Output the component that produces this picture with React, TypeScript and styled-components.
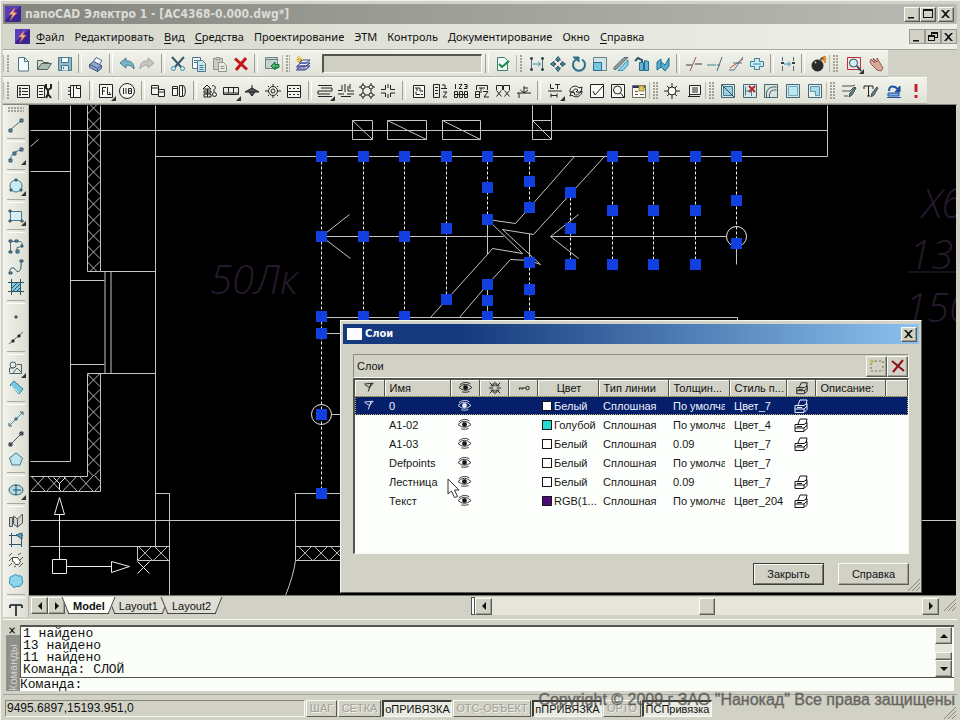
import React from "react";
import styled, { createGlobalStyle, css } from "styled-components";

const FACE = "#d2d1c6";
const SHADE = "#85857b";
const DARK = "#3c3c38";
const TOOL = "#e9eae1";
const UI = `"Liberation Sans", Arial, sans-serif`;
const MENU = `"Noto Sans", Tahoma, sans-serif`;

const GlobalStyle = createGlobalStyle`
  * { box-sizing: border-box; }
  body { margin: 0; background: ${FACE}; font-family: ${UI}; font-size: 11px; color: #111; }
  button, input { font: inherit; color: inherit; border-radius: 0; }
  button { padding: 0; margin: 0; }
`;

/* ---------- drawing data ---------- */

type Stroke = [d: string, stroke?: string, fill?: string, width?: number];

const K = "#222222";
const S = "#4e7488";
const B = "#2f8fb4";
const G = "#8f9691";

const icons: Record<string, Stroke[]> = {
  page: [["M3.5 1.5h6l4 4v9.500h-10z", S, "#f4fbff"], ["M9.500 1.500v4h4", S]],
  open: [["M1.500 13.500v-9h5l1 2h5v2", "#50645f", "#cfdcd2"], ["M1.500 13.500l4-6h10l-4 6z", "#50645f", "#a9bdb5"]],
  save: [["M1.500 1.500h13v13h-13z", S, "#8fbccb"], ["M4.500 1.500h7v5h-7z", S, "#f2fafc"], ["M4.500 14.500v-5h7v5", S, "#dcecf2"], ["M6.500 11v2", S]],
  print: [["M5 6L8 1.500l6 3L11 9", "#4c6688", "#fff"], ["M1.500 8.500l4-3 8 4v3l-4 3-8-4z", "#3b5484", "#8fa8c8"], ["M1.500 8.500l8 4 4-3M9.500 12.500v3", "#3b5484"]],
  undo: [["M1 7l6-5v3c5-.5 8 2 8 8-2-3-4-4-8-4v3z", S, "#79b7d0"]],
  redo: [["M15 7L9 2v3C4 4.500 1 7 1 13c2-3 4-4 8-4v3z", "#a3a8a2", "#c4c8c1"]],
  cut: [["M2 1l9 10M14 1L5 11", "#37566a", "none", 2], ["M1.500 12.500a2 2 0 1 0 4 0a2 2 0 1 0-4 0M10.500 12.500a2 2 0 1 0 4 0a2 2 0 1 0-4 0", B]],
  copy: [["M1.500 1.500h8v11h-8z", S, "#f4fbff"], ["M6.500 4.500h5l3 3v8h-8z", S, "#c4e6f1"], ["M3 4.500h3M3 6.500h3M8.500 9.500h4M8.500 11.500h4M8.500 13.500h4", S]],
  paste: [["M1.500 2.500h9v11h-9z", G, "#c9ccc3"], ["M4 1.500h4v2h-4z", G, "#ddd"], ["M6.500 6.500h5l3 3v6h-8z", G, "#e9ebe4"], ["M8.500 10.500h4M8.500 12.500h4", G]],
  remove: [["M2 2.500l12 11M13 2L3 14", "#c4161c", "none", 3]],
  insert: [["M1.500 1.500h12v11h-12z", "#6d8487", "#c5d2cb"], ["M1.500 3.500h12", "#6d8487"], ["M7 10l4-4v2.500h4v3h-4V14z", "#14713a", "#45b36a"]],
  layers: [["M2 13l4-3h9l-4 3zM2 10l4-3h9l-4 3zM4 7l3-3h8l-4 3z", "#39438f", "#f1f3fb", 1], ["M1 14h9l5-4M1 11h9l5-4", "#39438f"], ["M4 0v7M1 3.500h7M2 1l5 5M7 1L2 6", "#d5b32b"]],
  accept: [["M2.500 1.500h7l3 3v10h-10z", "#3d7c68", "#eefaf3"], ["M4 8l3 3 7-6", "#168a4b", "none", 2]],
  stretchX: [["M2.500 1v14M13.500 1v14", "#4b6a78"], ["M1 2.500h3M1 13.500h3M12 2.500h3M12 13.500h3", "#34434c", "none", 2], ["M4 8h7M9 5.500L11.500 8 9 10.500", B]],
  move: [["M8 1v5M8 10v5M1 8h5M10 8h5", "#47636f", "none", 2], ["M5.500 4L8 .5 10.500 4zM5.500 12L8 15.500l2.500-3.500zM4 5.500L.5 8 4 10.500zM12 5.500L15.500 8 12 10.500z", "#1e4d63", "#57a5c2"]],
  rotate: [["M5 3.500a6 6 0 1 0 6 0", "#2f6f8c", "none", 2], ["M2 1h6v5z", "#2f6f8c", "#2f6f8c"]],
  scale: [["M1.500 1.500h13v13h-13z", "#6b8089", "#cfe5ea"], ["M1.500 6.500h8v8h-8z", "#2a6f90", "#79c6e0"]],
  mirror: [["M1 11.500L11 1.500h4l-12 12H1z", "#5a6a70", "#8c9a9d"], ["M5 14.500L15 4v5l-5 5.500z", B, "#8fd0e4"]],
  array: [["M1 5l3-3 4 2v4", "#37566a", "none", 2], ["M5.500 6.500h4v8h-4zM10.500 4.500l4 1v9h-4z", "#226a8a", "#62b4d2"]],
  offset: [["M2 6l4-3v8l-4 3zM6 6l4 3 4-7v8l-4 5-4-4", "#226a8a", "#52b0d4"]],
  trim: [["M0 9h6M9 8h7", "#3a3f42"], ["M10 1L4 15", "#a55050"]],
  extend: [["M0 9h9", "#3f8298"], ["M10 9h3M15 1l-5 14", "#4b6a78"]],
  breakLine: [["M2 12L15 3", "#c0444c"], ["M1 14h5l9-13M5 7h9", "#52748a"]],
  join: [["M1.500 5.500h4v-3h5v3h4v5h-4v3h-5v-3h-4z", "#3a7f9c", "#cdebf3"], ["M4 8h8", B]],
  fit: [["M2.500 1v4M2.500 10v5M13.500 1v4M13.500 10v5", "#4b6a78"], ["M4 8h6M8 5.500L10.500 8 8 10.500", B], ["M1 7h3M12 7h3", "#34434c", "none", 2]],
  bomb: [["M1 9.500a5.500 5.500 0 1 0 11 0a5.500 5.500 0 1 0-11 0", "#1e1e1e", "#2b2b2b"], ["M9 5l2-3 2 1", "#6d5837", "none", 2], ["M12 1h3M12 5l3-3M14 4v3", "#e5902f", "none", 2], ["M4 7l1-1", "#bbb", "none", 2]],
  zoomBox: [["M1.500 1.500h13v12h-13z", "#c02b35"], ["M3.500 7a4 4 0 1 0 8 0a4 4 0 1 0-8 0", "#31485a", "#d5eff6"], ["M11 10l4 5", "#31485a", "none", 2]],
  pan: [["M2 3l4 4-2-5 4 4 0-4 3 5 3 5-2 3-4-1-5-5-2-3z", "#93574f", "#dba99b"]],

  list: [["M2.500 2.500h12v12h-12z", K, "#f4f5ef"], ["M7 5.500h6M7 8.500h6M7 11.500h6", K], ["M4 5.500h2M4 8.500h2M4 11.500h2", K, "none", 2]],
  listTool: [["M1.500 2.500h7v12h-7z", K, "#f4f5ef"], ["M3 5.500h4M3 8.500h4M3 11.500h4", K], ["M10 1v4l2 2v4l-2 4M15 1v4l-3 2M12 11l3 4", K, "none", 2]],
  book: [["M3.500 2.500h10v12h-10z", K, "#f7f8f2"], ["M6.500 2.500v12M9.500 2.500v3h4", K], ["M1 4.500h3M1 8h3M1 11.500h3", K]],
  fl: [["M1.500 1.500h13v13h-13z", K, "#f7f8f2"], ["M4.500 12V4.500H8M4.500 8H7M9.500 4v7.500H13M11 9l2 3", K]],
  num: [["M.5 8a7.500 7.500 0 1 0 15 0a7.500 7.500 0 1 0-15 0", K, "#f7f8f2"], ["M4.500 5v6M7 5v6M9.500 5.500h3v5h-3zM9.500 8h3", K]],
  copyObj: [["M1.500 2.500h7v9h-7zM1.500 5h7", K, "#f2f3ed"], ["M8.500 6.500h6v7h-6zM8.500 9h6", K, "#f2f3ed"]],
  panels: [["M1.500 3.500h5v9h-5zM1.500 5.500h5", K, "#f2f3ed"], ["M8.500 2.500h3v11h-3zM12 2.500c3 0 3 11 0 11", K, "#f2f3ed"]],
  house: [["M1 6l4-4 4 4zM2 8h7v2H2zM2 11h7v3H2zM5.500 6v8", K], ["M10 3c2-1 4 0 3 3M12 6v3M10.500 11.500a2 2 0 1 0 4 0a2 2 0 1 0-4 0", K]],
  wall: [["M.5 4.500h15v7H.5zM.5 10h15M5.500 4.500V10M10.500 4.500V10", K]],
  lamp: [["M8 2v4M1 9l7-4 7 4zM5 9l3 4 3-4", K, "#555"]],
  sun: [["M3.500 8a4.500 4.500 0 1 0 9 0a4.500 4.500 0 1 0-9 0M6 8a2 2 0 1 0 4 0a2 2 0 1 0-4 0", K], ["M8 1v2M8 13v2M0 8h3M13 8h3M3 3l1 1M13 3l-1 1M3 13l1-1M13 13l-1-1", K]],
  grille: [["M1.500 2.500h13v12h-13z", K, "#f2f3ed"], ["M1.500 8.500h13M3 5.500h2M7 5.500h2M11 5.500h2M3 11.500h2M7 11.500h2M11 11.500h2", K]],
  route: [["M1 2.500h14M1 13.500h14M4 5h11v3H1v3h12", K]],
  crossA: [["M0 11h6M9 11h7M0 7.500h4V2M7 1v8M10 3v5h6M12 1v5M3 13.500h10", K]],
  nodes: [["M2 4a2 2 0 1 0 4 0a2 2 0 1 0-4 0M10 4a2 2 0 1 0 4 0a2 2 0 1 0-4 0M2 12a2 2 0 1 0 4 0a2 2 0 1 0-4 0M10 12a2 2 0 1 0 4 0a2 2 0 1 0-4 0", K], ["M4 0v2M12 0v2M6 4h4M0 4h2M14 4h2M4 6v4M12 6v4M6 12h4M0 12h2M14 12h2M4 14v2M12 14v2", K]],
  junction: [["M1 6.500h4.500V2M10.500 2v4.500H15M1 10h4.500v4M10.500 14v-4H15M8 1v4M8 11v4", K]],
  tree: [["M2.500 2.500h11v12h-11z", K, "#f7f8f2"], ["M4 5h5v3h3M5 8.500v3h4M10 11.500h2M6 5v3", K]],
  sortDoc: [["M1.500 1.500h6v13h-6z", K], ["M3 4.500h3M3 7.500h3M3 10.500h3M10 2h3v4M11 9h4l-4 5h4M9 5.500h6", K]],
  digits: [["M2.500 1v5M6 1.500h3l-3 4h3M11 1.500h3v4h-3M12 3.500h2", K], ["M1.500 8.500h3v6h-3zM6.500 8.500h3v6h-3zM11.500 8.500h3v6h-3zM1.500 11.500h13", K]],
  devices: [["M2.500 7V2.500h11V7M5 5h6M1.500 8.500h4v6h-4zM1.500 11.500h4M9 8.500h5l-4 5.500h5M7 5v5", K]],
  links: [["M1.500 7V2.500h6V7M8.500 7V2.500h6V7M1.500 7.500l5 6M6.500 7.500l-5 6M9.500 7.500l5 6M14.500 7.500l-5 6", K]],
  branch: [["M1 10h14M8 3v7M8 5h4M3 10v5M4.500 7L8 10l4-3", K]],
  lt: [["M3.500 1v4.500H7M8 1.500h5M10.500 1.500V6M1 8h14M4 10.500v4M4 12.500h6M10 10.500v4", K]],
  refresh: [["M2 9c-1-5 6-8 9-4l3-1-1 5H8l2-2c-2-2-5-1-5 2zM14 8c0 5-6 8-10 4l-2 1 1-4 4 1-1 1c2 2 5 1 6-2z", K, "#f7f8f2"]],
  check: [["M1.500 1.500h13v13h-13z", K, "#fafbf6"], ["M4 8l2 4 8-9", K]],
  find: [["M1.500 1.500h13v13h-13z", K, "#f7f8f2"], ["M3.500 7a4 4 0 1 0 8 0a4 4 0 1 0-8 0M10.500 10l4 5", K, "none", 1]],
  props: [["M1.500 2.500h13v12h-13z", "#6d6d5d", "#fbfbf4"], ["M2 4h12", "#27306c", "none", 2], ["M8 3h5v5H8z", "#a08a3a", "#e2c75c"], ["M4 8.500h3M4 11.500h3M9 11.500h4", "#555"]],
  target: [["M4 8a4 4 0 1 0 8 0a4 4 0 1 0-8 0", K, "#f7f8f2"], ["M8 0v4M8 12v4M0 8h4M12 8h4M3 3l2 2M13 3l-2 2M3 13l2-2M13 13l-2-2", K]],
  sheet: [["M3.500 2.500h11v9h-11z", K, "#f7f8f2"], ["M6 5h6M6 7h6M6 9h6M2 13.500h12M3.500 5v8", K, "none", 1]],
  viewLine: [["M1.500 1.500h13v13h-13z", "#476774", "#d8e9e9"], ["M3.500 3.500h9v9h-9z", "#477c94", "#9dd0e0"], ["M2 2l12 12", "#2c4853"]],
  viewX: [["M1.500 1.500h13v13h-13z", "#476774", "#d8e9e9"], ["M3.500 12.500v-9M3.500 8h6v5", "#477c94"], ["M7 3l6 6M13 3L7 9", "#b8202a", "none", 2]],
  viewArc: [["M1.500 1.500h13v13h-13z", "#476774", "#d8e2dc"], ["M3.500 14V9q2-5 6-5h4M6.500 14v-3q1-4 4-4h3", "#4b666d"]],
  viewRect: [["M1.500 1.500h13v13h-13z", "#476774", "#cfe9ef"], ["M3.500 3.500h9v9h-9z", "#72aabf", "#bfe7f2"]],
  viewL: [["M1.500 1.500h13v13h-13z", "#476774", "#e4efee"], ["M3.500 3.500h9v9h-4v-4h-5z", "#5f91a7", "#a6dcee"]],
  flow: [["M1 3h10l3-1M1 8h8l4-4M3 13h4", "#47555a"], ["M8 14l1-4 5-6 1 1-4 7z", "#3a5058", "#66828a"]],
  textBrush: [["M1 3h9M5.500 3v10M1 3v3M10 3v3M4 13h3", K, "none", 1], ["M8 14l1-4 5-6 1 1-4 7z", "#3a5058", "#66828a"]],
  export: [["M1 14.500h14M2 10h11v3H2z", "#1d4fa3", "#7fb0e2"], ["M3 8q0-6 6-4l4 3", "#1d4fa3", "none", 2], ["M14 3v6H9z", "#1d4fa3", "#1d4fa3"]],
  alert: [["M8 1v8", "#c4252c", "none", 3], ["M8 12v3", "#c4252c", "none", 3]],

  line: [["M2 13L14 3", S], ["M1 12h3v3H1zM12 2h3v3h-3z", "#37566a", "#5b90a6"]],
  arc: [["M2 14Q3 4 14 3", S], ["M1 12h3v3H1zM12 1h3v3h-3zM5 5h3v3H5z", "#37566a", "#5b90a6"]],
  circle: [["M2 8a6 6 0 1 0 12 0a6 6 0 1 0-12 0", S, "#c8ecf5"], ["M7 1h2v2H7zM2 11h2v2H2zM12 11h2v2h-2z", "#37566a", "#5b90a6"]],
  rect: [["M2.500 3.500h11v9h-11z", S, "#d6edf2"], ["M1 2h2v2H1zM13 12h2v2h-2zM1 12h2v2H1z", "#37566a", "#5b90a6"]],
  poly: [["M2.500 14V3.500H11q4 0 3 4-1 2-5 2v4", S], ["M1 2h3v2H1zM7 2h3v2H7zM1 13h3v2H1zM8 12h3v3H8zM13 7h2v2h-2z", "#37566a", "#5b90a6"]],
  spline: [["M2 14q-1-6 4-5 2 3 4 4 4-2 3-11", "#37566a"], ["M12 1h3v2h-3zM1 13h3v2H1z", "#37566a", "#5b90a6"]],
  hatch: [["M3.500 3.500h9v9h-9z", "#2e5264", "#7fc9df"], ["M0 3.500h16M0 12.500h16M3.500 0v16M12.500 0v16M4 9l5-5M5 12l7-7M9 12l3-3", "#2e5264"]],
  point: [["M7 7h2v2H7z", "#37424a", "#9aa9ad"]],
  ray: [["M1 14L15 2", "#5a6e76"], ["M4 10h2v2H4zM10 5h2v2h-2z", "#222", "#455"]],
  region: [["M2 5a3 3 0 1 0 6 0a3 3 0 1 0-6 0M1.500 12.500V8h4M1.500 13.500h12v-9H9M5 13l4-5 4 4", "#48606b"]],
  tag: [["M2 5l4-4 9 8-4 5z", "#2c7f9c", "#7cc8df"], ["M3 6l8 7", "#fff"]],
  construct: [["M2 14L14 2", B], ["M7 7h2v2H7zM1 12v3h3M12 1h3v3", "#37566a"]],
  segment: [["M2 14L14 2", "#4b5a60"], ["M1 12h3v3H1zM12 1h3v3h-3z", "#37424a", "#556"]],
  pentagon: [["M8 2l6.500 5-2.500 7H4L1.500 7z", S, "#b8e5ef"]],
  ellipse: [["M1 8a7 5 0 1 0 14 0a7 5 0 1 0-14 0", "#356178", "#b4dbe8"], ["M8 2v11M5 8h8", "#24485c"]],
  map: [["M1.500 5.500h3v9h-3zM5.500 4l4 3v8l-4-3zM9.500 7l5-5v9l-5 4", "#4a5558", "#d0d4cc"]],
  clip: [["M1 3.500h14M1 12.500h13M3.500 1v14M13.500 4v11", "#37566a"], ["M8 3l6-2v6z", "#37566a", "#57a5c2"]],
  island: [["M1 4l3-3M1 9l4-4M10 3l3-2M12 8l3-3M1 14l3-3M11 15l4-4M6 15l2-1", "#555"], ["M4.500 5.500h5l3 4-2 3h-3l-2-3h-1z", "#444", "#fff"]],
  cloud: [["M5 3q3-3 5 0 5-1 4 3 2 4-1 6-2 3-4 1-4 3-5-1-4-1-2-5-1-4 3-4z", B, "#8fd6ec"]],
  text: [["M2 4h12M8 4v11M2 4v3M14 4v3", "#3d474b", "none", 2]],

  flag: [["M1.500 3.500l10-1-4 5-5-3M9 3L6 12", "currentColor"]],
  eye: [["M0 8q8-8 16 0-8 7-16 0z", "currentColor"], ["M5.500 8a2.500 2.500 0 1 0 5 0a2.500 2.500 0 1 0-5 0", "currentColor", "currentColor"], ["M1 4.500q7-5 13-1M4 13.500q5 1 9-.5", "currentColor"]],
  snow: [["M8 1v5M8 10v5M1 8h5M10 8h5M2 2l4 4M14 2l-4 4M2 14l4-4M14 14l-4-4M3 5.500h3v-3M10 2.500v3h3M3 10.500h3v3M13 10.500h-3v3", "currentColor"]],
  key: [["M10 8a2 2 0 1 0 4 0a2 2 0 1 0-4 0M10 8H2M3 8v2M6 8v2", "currentColor"]],
  printer: [["M5 7l2-5h7l-1 5", "currentColor"], ["M2 7.500h9l3-2v6l-3 3H2zM2 11h9l3-3M11 11v3M4 9.500h5", "currentColor"]],
  addRow: [["M2 3h2M6 3h2M10 3h2M14 3v2M2 5v2M2 9v2M2 13h2M6 13h2M10 13h2M14 8v2M14 12v1", "#6f6f4c"], ["M3 1v5M1 3.500h5", "#c2b53e"]],
  dropRow: [["M2 3l12 10M13 2L3 14", "#8a1217", "none", 2]],
};

const Svg = styled.svg<{ $w: number; $h: number }>`
  display: block;
  flex: none;
  width: ${(p) => p.$w}px;
  height: ${(p) => p.$h}px;
  overflow: visible;
`;

function Icon({ name, size = 16, more = false }: { name: string; size?: number; more?: boolean }) {
  return (
    <Svg $w={size} $h={size} viewBox="0 0 16 16" aria-hidden="true">
      {icons[name].map(([d, stroke, fill, width], i) => (
        <path key={i} d={d} stroke={stroke ?? K} fill={fill ?? "none"} strokeWidth={width ?? 1} />
      ))}
      {more && <path d="M18 13v5h-5z" fill="#333" />}
    </Svg>
  );
}

function Bolt({ size }: { size: number }) {
  return (
    <Svg $w={size} $h={size} viewBox="0 0 16 16" aria-hidden="true">
      <rect width="16" height="16" rx="1" fill="#3b2391" />
      <path d="M0 0h16L0 14z" fill="#5a3cb8" />
      <path d="M10 1.500L4 8.500h3.500L5 14.500l7-8H8.500z" fill="#f6b777" stroke="#c65f5f" strokeWidth=".5" />
    </Svg>
  );
}

/* ---------- frame ---------- */

const raised = css`
  background: ${FACE};
  border: 1px solid;
  border-color: #fbfbf5 #5c5c55 #5c5c55 #fbfbf5;
  box-shadow: inset -1px -1px 0 #a09f95;
`;

const Window = styled.div`
  display: flex;
  flex-direction: column;
  min-height: 100vh;
  padding: 4px 3px 0;
  background: ${FACE};
  box-shadow: inset 1px 1px 0 #f3f3ec;
`;

const TitleBar = styled.header`
  display: flex;
  align-items: center;
  height: 20px;
  padding: 0 3px 0 2px;
  background: linear-gradient(90deg, #858680, #b9bbb5);
  color: #dcdcd6;
`;

const Title = styled.h1`
  flex: 1;
  margin: 0 0 0 4px;
  font: bold 12px/18px "DejaVu Sans Condensed", "Noto Sans", Tahoma, sans-serif;
  white-space: nowrap;
`;

const Caption = styled.button`
  ${raised}
  display: grid;
  place-items: center;
  width: 16px;
  height: 15px;
  &:last-child { margin-left: 2px; }
`;

const MdiCaption = styled(Caption)`
  border-color: #9a9a90;
  box-shadow: none;
  &:last-child { margin-left: 0; }
`;

function CaptionGlyph({ kind }: { kind: "min" | "max" | "restore" | "close" }) {
  const d = {
    min: "M1 8h6v1.500H1z",
    max: "M0 0h10v9H0zM1 2v6h8V2z",
    restore: "M3 0h7v6H7v3H0V3h3zM4 2v1h3v2h2V2zM1 5v3h5V5z",
    close: "M0 1h2l2.500 2.500L7 1h2L5.500 5 9 9H7L4.500 6.500 2 9H0l3.500-4z",
  }[kind];
  return (
    <Svg $w={10} $h={10} viewBox="0 0 10 10" aria-hidden="true">
      <path d={d} fill="#111" fillRule="evenodd" />
    </Svg>
  );
}

const MenuBar = styled.nav`
  display: flex;
  align-items: center;
  height: 26px;
  padding: 0 0 0 2px;
  border-bottom: 1px solid #a5a59b;
  background: linear-gradient(90deg, #d6d7cc, #eff1e9);
`;

const Menus = styled.div`
  display: flex;
  flex: 1;
  gap: 10px;
  margin-left: 6px;
`;

const MenuItem = styled.button`
  border: 0;
  background: none;
  font: 11px/16px ${MENU};
  white-space: nowrap;
  u { text-underline-offset: 2px; }
`;

const ToolRow = styled.div`
  display: flex;
  height: 27px;
`;

const ToolBar = styled.div<{ $width: number }>`
  display: flex;
  align-items: stretch;
  flex: 0 0 ${(p) => p.$width}px;
  background: linear-gradient(#f1f2ea, #e0e1d7);
  border-top: 1px solid #fbfbf6;
  border-bottom: 1px solid #b4b4a9;
`;

const Grip = styled.span<{ $width?: number; $across?: boolean }>`
  flex: 0 0 ${(p) => p.$width ?? 10}px;
  margin: ${(p) => (p.$across ? "2px 4px" : "4px 0")};
  background: radial-gradient(circle at 1px 1px, #a3a399 1px, transparent 1px) 3px 0 / 3px 3px;
  ${(p) => !p.$across && css`
    background-clip: content-box;
    padding: 0 3px;
    border-left: 1px solid #b9b9ae;
  `}
`;

const Tool = styled.button<{ $across?: boolean }>`
  display: grid;
  place-items: center;
  flex: 1 1 ${(p) => (p.$across ? 20 : 21)}px;
  min-width: 0;
  min-height: 0;
  border: 0;
  background: none;
`;

const Split = styled.span<{ $across?: boolean }>`
  flex: 0 0 8px;
  &::after {
    content: "";
    display: block;
    ${(p) => p.$across
      ? css`height: 2px; margin: 3px 3px; border-top: 1px solid #a9a99e; border-bottom: 1px solid #fff;`
      : css`width: 2px; height: 19px; margin: 3px; border-left: 1px solid #a0a096; border-right: 1px solid #fff;`}
  }
`;

const LayerBar = styled(ToolBar)`
  padding-right: 3px;
`;

const LayerField = styled.input`
  width: 164px;
  height: 19px;
  margin: 3px 0 0 8px;
  border: 1px solid;
  border-color: #55554f #fafaf4 #fafaf4 #55554f;
  border-width: 2px 1px 1px 2px;
  background: #cfcfc4;
`;

function Tools({ names, across = false }: { names: string; across?: boolean }) {
  return (
    <>
      {names.split(" ").map((n, i) => {
        if (n === "|") return <Split key={i} $across={across} />;
        const id = n.replace("+", "");
        return (
          <Tool key={i} type="button" $across={across} aria-label={id}>
            <Icon name={id} more={n.endsWith("+")} />
          </Tool>
        );
      })}
    </>
  );
}

/* ---------- work area ---------- */

const Work = styled.main`
  display: flex;
  flex: 1;
  min-height: 0;
  border-top: 1px solid #85857b;
`;

const SideTools = styled.div`
  display: flex;
  flex-direction: column;
  flex: 0 0 26px;
  overflow: hidden;
  background: linear-gradient(90deg, #f0f1e9, #dcddd2);
  border-left: 1px solid #fafaf4;
  border-right: 1px solid #b5b5aa;
`;

const CutTool = styled(Tool)`
  flex: 0 0 16px;
`;

const Sheet = styled.section`
  position: relative;
  display: flex;
  flex: 1;
  flex-direction: column;
  min-width: 0;
  padding-right: 1px;
`;

const Drawing = styled.svg`
  display: block;
  flex: 1 1 480px;
  width: 100%;
  min-height: 0;
  background: #000;
`;

const lines =
  "M30 130H827M155 156H827V105M70 105V461M87 105V271M100 105V271M87 271H155M30 171H70M30 146L38 139" +
  "M155 105V546M70 280H104M104.500 271V373M110.500 271V373M70 364H104M87 373H155M87 373V476M100 373V491" +
  "M30 476H87M30 491H100M30 461H70M155 493H169V595M30 520H341M921 520H960M30 546H169M137 546V560H169" +
  "M294 493H341M295 493V560H341M295 546H341M295 560Q293 575 285 595" +
  "M352 120H372V139H352ZM352 120L372 139M387 120H426V139H387ZM387 120L426 139M442 120H480V139H442ZM442 120L480 139" +
  "M532 105V139H551V105M532 120H551M532 120L551 139" +
  "M321 236H503M550 236H726M349 214L321 236L350 258M578 214L550 236L578 258" +
  "M574 156L515 223L487 219L522 253L492 248L487 254L430 317M604 156L533 234L502 229L540 264L529 260L510 259L487 284L459 317" +
  "M487 219V254M529 233V262M487 284V316M736 243V264M321 317H737V322M321 333H341M331 414H341";

const ucs =
  "M52 559H66V573H52ZM59 559V514M59 497L54 514H64ZM66 566H111M129 566L111 561V572ZM137 561L149 573M149 561L137 573M53 477L59 483L65 477M59 483V489";

const dashes: [number, number, number][] = [
  [321, 156, 493], [363, 156, 316], [404, 156, 316], [446, 156, 299], [487, 156, 219],
  [529, 156, 207], [529, 262, 316], [570, 192, 264], [612, 156, 264], [653, 156, 264],
  [695, 156, 264], [736, 156, 243],
];

const nodes: [number, number[]][] = [
  [321, [156, 236, 316, 333, 414, 493]],
  [363, [156, 236, 316]],
  [404, [156, 236, 316]],
  [446, [156, 228, 299]],
  [487, [156, 187, 219, 284, 300, 316]],
  [529, [156, 181, 207, 262, 289, 316]],
  [570, [192, 228, 264]],
  [612, [156, 210, 264]],
  [653, [156, 210, 264]],
  [695, [156, 210, 264]],
  [736, [156, 200, 243]],
];

const Faint = styled.text`
  fill: #261a2c;
  font: italic 40px "Open Sans", sans-serif;
  font-weight: 300;
`;

function Plan() {
  return (
    <Drawing role="img" aria-label="План">
      <defs>
        <pattern id="cv" x="87" y="116" width="13" height="16" patternUnits="userSpaceOnUse">
          <path d="M0 1.500l13 13M13 1.500l-13 13" stroke="#b8b8b8" fill="none" />
        </pattern>
        <pattern id="ch" x="30" y="476" width="16" height="15" patternUnits="userSpaceOnUse">
          <path d="M1 0l14 15M15 0l-14 15" stroke="#b8b8b8" fill="none" />
        </pattern>
        <pattern id="cf" x="137" y="546" width="16" height="14" patternUnits="userSpaceOnUse">
          <path d="M1 0l14 14M15 0l-14 14" stroke="#b8b8b8" fill="none" />
        </pattern>
      </defs>
      <g transform="translate(-29 -105)">
        <Faint x="210" y="294">50Лк</Faint>
        <Faint x="922" y="218">Хб</Faint>
        <Faint x="909" y="269">13</Faint>
        <Faint x="905" y="322">150</Faint>
        <path d="M908 272H958" stroke="#2b2032" />
        <path d="M87 105h13v166h-13zM87 373h13v103h-13z" fill="url(#cv)" />
        <path d="M30 476h70v15h-70z" fill="url(#ch)" />
        <path d="M137 546h32v14h-32zM295 546h46v14h-46z" fill="url(#cf)" />
        <g transform="translate(.5 .5)" fill="none" stroke="#c4c4c4">
          <path d={lines} />
          <path d={ucs} stroke="#eeeeee" />
          <circle cx="736" cy="236" r="10" stroke="#eeeeee" />
          <circle cx="321" cy="414" r="10" stroke="#eeeeee" />
          {dashes.map(([x, a, b], i) => (
            <path key={i} d={`M${x} ${a}V${b}`} stroke="#eeeeee" strokeDasharray="3 2" />
          ))}
        </g>
        {nodes.map(([x, ys]) =>
          ys.map((y) => <rect key={`${x}-${y}`} x={x - 5} y={y - 5} width="11" height="11" fill="#123fe0" />)
        )}
      </g>
    </Drawing>
  );
}

const TabRow = styled.div`
  display: flex;
  align-items: flex-start;
  height: 22px;
  padding: 1px 0 0 2px;
  border-top: 1px solid #77776f;
`;

const Arrow = styled.button<{ $dir: "left" | "right" | "up" | "down" }>`
  ${raised}
  display: grid;
  place-items: center;
  flex: none;
  width: 17px;
  height: 17px;
  &::before {
    content: "";
    border: 4px solid transparent;
    ${(p) => p.$dir === "left" && css`border-right-color: #111; border-left-width: 0;`}
    ${(p) => p.$dir === "right" && css`border-left-color: #111; border-right-width: 0;`}
    ${(p) => p.$dir === "up" && css`border-bottom-color: #111; border-top-width: 0;`}
    ${(p) => p.$dir === "down" && css`border-top-color: #111; border-bottom-width: 0;`}
  }
`;

const Tab = styled.button<{ $active?: boolean }>`
  position: relative;
  z-index: ${(p) => (p.$active ? 1 : 0)};
  height: 17px;
  padding: 0 8px;
  border: 0;
  background: none;
  font-size: 11px;
  font-weight: ${(p) => (p.$active ? "bold" : "normal")};
  & + & { margin-left: -2px; }
  &::before, &::after {
    content: "";
    position: absolute;
    z-index: -1;
    top: 0;
    bottom: 0;
    border-bottom: 1px solid #444;
    background: ${(p) => (p.$active ? "#fbfdf7" : "#deded4")};
  }
  &::before { left: 0; right: 30%; border-left: 1px solid #444; transform: skewX(22deg); }
  &::after { left: 30%; right: 0; border-right: 1px solid #444; transform: skewX(-22deg); }
`;

const Track = styled.div`
  display: flex;
  align-items: center;
  flex: 0 1 468px;
  margin-left: auto;
  margin-right: 17px;
  background: #e7e6dd;
`;

const Splitter = styled.span`
  width: 4px;
  height: 18px;
  border: 1px solid #55554f;
  background: #fff;
`;

const Thumb = styled.span`
  ${raised}
  width: 16px;
  height: 17px;
  margin: 0 auto;
`;

const RunTrack = styled.span`
  display: flex;
  flex: 1;
`;

/* ---------- dialog ---------- */

const Dialog = styled.section`
  position: absolute;
  left: 311px;
  top: 215px;
  width: 582px;
  padding: 3px 2px 7px;
  border: 1px solid;
  border-color: #fafaf4 #5c5c55 #5c5c55 #fafaf4;
  background: ${FACE};
`;

const DialogTitle = styled.header`
  display: flex;
  align-items: center;
  height: 20px;
  padding: 0 2px 0 4px;
  background: linear-gradient(90deg, #14397c, #14397c 20%, #8cc2ee);
  color: #f4f6fa;
`;

const DialogIcon = styled.span`
  width: 15px;
  height: 12px;
  background: #fafcff;
`;

const DialogName = styled.h2`
  flex: 1;
  margin: 0 0 0 3px;
  font: bold 11px/16px "DejaVu Sans Condensed", "DejaVu Sans", Tahoma, sans-serif;
`;

const DialogBody = styled.div`
  padding: 10px 10px 0;
`;

const ListBar = styled.div`
  display: flex;
  align-items: center;
  height: 24px;
  padding: 0 0 0 3px;
  border: 1px solid #8d8d83;
  border-bottom-color: #fafaf4;
  border-right-color: #fafaf4;
`;

const ListName = styled.span`
  flex: 1;
`;

const ListButton = styled.button`
  ${raised}
  display: grid;
  place-items: center;
  width: 21px;
  height: 21px;
`;

const ListBox = styled.div`
  min-height: 176px;
  border: 1px solid;
  border-width: 2px 1px 1px 2px;
  border-color: #55554f #fafaf4 #fafaf4 #55554f;
  background: #fcfffb;
`;

const Table = styled.table`
  width: 100%;
  table-layout: fixed;
  border-collapse: collapse;
`;

const Col = styled.col<{ $w?: number }>`
  width: ${(p) => (p.$w ? `${p.$w}px` : "auto")};
`;

const Head = styled.th<{ $center?: boolean }>`
  height: 16px;
  padding: 0 2px 0 5px;
  border-right: 1px solid #55554f;
  border-bottom: 1px solid #77776f;
  background: ${FACE};
  box-shadow: inset 1px 1px 0 #fafaf4;
  font-weight: normal;
  line-height: 14px;
  text-align: ${(p) => (p.$center ? "center" : "left")};
  white-space: nowrap;
  overflow: hidden;
`;

const Row = styled.tr<{ $on?: boolean }>`
  height: 19px;
  background: ${(p) => (p.$on ? "#061f6b" : "transparent")};
  color: ${(p) => (p.$on ? "#eef2fb" : "#161616")};
  outline: ${(p) => (p.$on ? "1px dotted #b9b06b" : "none")};
  outline-offset: -1px;
`;

const Cell = styled.td`
  padding: 0 4px 0 5px;
  line-height: 18px;
`;

const Mark = styled.span`
  display: grid;
  place-items: center;
  margin: 0 -4px 0 -5px;
`;

const Clip = styled.span`
  display: block;
  overflow: hidden;
  white-space: nowrap;
`;

const ColorCell = styled.span`
  display: flex;
  align-items: center;
  gap: 2px;
  margin-right: -4px;
  white-space: nowrap;
`;

const Swatch = styled.i<{ $c: string }>`
  flex: none;
  width: 10px;
  height: 10px;
  border: 1px solid #161616;
  background: ${(p) => p.$c};
`;

const Actions = styled.footer`
  display: flex;
  justify-content: flex-end;
  gap: 14px;
  padding-top: 9px;
`;

const Action = styled.button<{ $default?: boolean }>`
  ${raised}
  width: 71px;
  height: 22px;
  ${(p) => p.$default && css`
    border-color: #3c3c38;
    box-shadow: inset 1px 1px 0 #fafaf4, inset -1px -1px 0 #77776f;
  `}
`;

const Resize = styled.svg`
  position: absolute;
  right: 1px;
  bottom: 1px;
  width: 13px;
  height: 13px;
`;

const SheetResize = styled(Resize)`
  bottom: 6px;
`;

function ResizeLines() {
  return <path d="M1 13L13 1M5 13l8-8M9 13l4-4" stroke={SHADE} fill="none" />;
}

const Pointer = styled.svg`
  position: absolute;
  left: 418px;
  top: 373px;
  width: 13px;
  height: 21px;
`;

type Layer = [name: string, swatch: string, color: string, weight: string, style: string, prints: boolean];

const layers: Layer[] = [
  ["0", "#ffffff", "Белый", "По умолчанию", "Цвет_7", true],
  ["A1-02", "#23dbd2", "Голубой", "По умолчанию", "Цвет_4", true],
  ["A1-03", "#ffffff", "Белый", "0.09", "Цвет_7", true],
  ["Defpoints", "#ffffff", "Белый", "По умолчанию", "Цвет_7", false],
  ["Лестница", "#ffffff", "Белый", "0.09", "Цвет_7", true],
  ["Текст", "#4b0d78", "RGB(1...", "По умолчанию", "Цвет_204", true],
];

const columnWidths = [29, 66, 29, 29, 29, 61, 70, 61, 57, 29, 70];

function LayersDialog() {
  return (
    <Dialog role="dialog" aria-label="Слои">
      <DialogTitle>
        <DialogIcon />
        <DialogName>Слои</DialogName>
        <Caption type="button" aria-label="Закрыть окно"><CaptionGlyph kind="close" /></Caption>
      </DialogTitle>
      <DialogBody>
        <ListBar>
          <ListName>Слои</ListName>
          <ListButton type="button" aria-label="Создать слой"><Icon name="addRow" /></ListButton>
          <ListButton type="button" aria-label="Удалить слой"><Icon name="dropRow" /></ListButton>
        </ListBar>
        <ListBox>
          <Table>
            <colgroup>
              {columnWidths.map((w, i) => <Col key={i} $w={w} />)}
              <Col />
            </colgroup>
            <thead>
              <tr>
                <Head aria-label="Текущий"><Mark><Icon name="flag" size={14} /></Mark></Head>
                <Head>Имя</Head>
                <Head aria-label="Видимость"><Mark><Icon name="eye" size={13} /></Mark></Head>
                <Head aria-label="Заморозка"><Mark><Icon name="snow" size={14} /></Mark></Head>
                <Head aria-label="Блокировка"><Mark><Icon name="key" size={14} /></Mark></Head>
                <Head $center>Цвет</Head>
                <Head>Тип линии</Head>
                <Head>Толщин...</Head>
                <Head>Стиль п...</Head>
                <Head aria-label="Печать"><Mark><Icon name="printer" size={14} /></Mark></Head>
                <Head>Описание:</Head>
                <Head aria-hidden="true" />
              </tr>
            </thead>
            <tbody>
              {layers.map(([name, swatch, color, weight, style, prints], i) => (
                <Row key={name} $on={i === 0}>
                  <Cell>{i === 0 && <Mark><Icon name="flag" size={14} /></Mark>}</Cell>
                  <Cell>{name}</Cell>
                  <Cell><Mark><Icon name="eye" size={13} /></Mark></Cell>
                  <Cell />
                  <Cell />
                  <Cell><ColorCell><Swatch $c={swatch} />{color}</ColorCell></Cell>
                  <Cell>Сплошная</Cell>
                  <Cell><Clip>{weight}</Clip></Cell>
                  <Cell>{style}</Cell>
                  <Cell>{prints && <Mark><Icon name="printer" size={16} /></Mark>}</Cell>
                  <Cell />
                  <Cell />
                </Row>
              ))}
            </tbody>
          </Table>
        </ListBox>
        <Actions>
          <Action type="button" $default>Закрыть</Action>
          <Action type="button">Справка</Action>
        </Actions>
      </DialogBody>
      <Resize viewBox="0 0 13 13" aria-hidden="true"><ResizeLines /></Resize>
    </Dialog>
  );
}

/* ---------- command panel and status ---------- */

const Command = styled.section`
  display: flex;
  height: 76px;
  margin-top: 2px;
  padding: 5px 3px 3px 2px;
  border-top: 1px solid #fafaf4;
  border-bottom: 1px solid #a5a59b;
`;

const Strip = styled.div`
  display: flex;
  flex-direction: column;
  align-items: center;
  flex: 0 0 15px;
`;

const StripClose = styled.button`
  display: grid;
  place-items: center;
  width: 13px;
  height: 10px;
  border: 0;
  background: none;
  svg { width: 7px; height: 7px; }
`;

const StripName = styled.span`
  flex: 1;
  width: 14px;
  background: #8f908a;
  color: #d2d2cc;
  font-size: 11px;
  line-height: 14px;
  writing-mode: vertical-rl;
  transform: rotate(180deg);
  text-align: left;
  white-space: nowrap;
`;

const Console = styled.div`
  display: flex;
  flex: 1;
  flex-direction: column;
  min-width: 0;
  border-top: 2px solid #55554f;
  background: #fafdf8;
  font: 13px/12px "Liberation Mono", "Courier New", monospace;
`;

const History = styled.div`
  display: flex;
  height: 52px;
  border-left: 1px solid #55554f;
  border-bottom: 1px solid #55554f;
`;

const Log = styled.pre`
  flex: 1;
  margin: 0;
  padding: 1px 2px;
  font: inherit;
`;

const VScroll = styled.div`
  display: flex;
  flex-direction: column;
  justify-content: space-between;
  width: 17px;
  margin-right: 2px;
  background: #e7e6dd;
`;

const VThumb = styled.span`
  ${raised}
  height: 8px;
  margin-top: auto;
`;

const Prompt = styled.label`
  display: flex;
  align-items: center;
  height: 14px;
`;

const PromptInput = styled.input`
  flex: 1;
  height: 12px;
  padding: 0;
  border: 0;
  outline: 0;
  background: none;
`;

const Status = styled.footer`
  position: relative;
  display: flex;
  align-items: center;
  height: 22px;
  margin: 3px 0 0;
  padding: 0 0 2px 2px;
`;

const Coords = styled.output`
  width: 300px;
  padding-left: 1px;
  border: 1px solid;
  border-color: #85857b #fafaf4 #fafaf4 #85857b;
  font-size: 12px;
  line-height: 15px;
`;

const Mode = styled.button<{ $w: number; $on?: boolean }>`
  width: ${(p) => p.$w}px;
  height: 17px;
  margin-left: 1px;
  border: 1px solid;
  font-size: 11px;
  line-height: 14px;
  white-space: nowrap;
  ${(p) => p.$on
    ? css`border-color: ${DARK} #fafaf4 #fafaf4 ${DARK}; border-width: 2px 1px 1px 2px; background: ${TOOL}; color: #111;`
    : css`border-color: #fafaf4 #5c5c55 #5c5c55 #fafaf4; background: ${FACE}; color: #a0a096; text-shadow: 1px 1px 0 #f1f1ea;`}
`;

const Copyright = styled.p`
  position: absolute;
  right: 2px;
  bottom: 10px;
  margin: 0;
  color: rgba(70, 70, 68, 0.75);
  font-size: 16px;
  line-height: 20px;
  -webkit-text-stroke: 1px rgba(90, 90, 88, 0.4);
  white-space: nowrap;
  pointer-events: none;
`;

const menus: [string, string][] = [
  ["Ф", "айл"], ["", "Редактировать"], ["В", "ид"], ["С", "редства"], ["", "Проектирование"],
  ["", "ЭТМ"], ["", "Контроль"], ["", "Документирование"], ["", "Окно"], ["С", "правка"],
];

export default function App() {
  return (
    <>
      <GlobalStyle />
      <Window>
        <TitleBar>
          <Bolt size={16} />
          <Title>nanoCAD Электро 1 - [AC4368-0.000.dwg*]</Title>
          <Caption type="button" aria-label="Свернуть"><CaptionGlyph kind="min" /></Caption>
          <Caption type="button" aria-label="Развернуть"><CaptionGlyph kind="max" /></Caption>
          <Caption type="button" aria-label="Выход"><CaptionGlyph kind="close" /></Caption>
        </TitleBar>
        <MenuBar>
          <Grip />
          <Bolt size={15} />
          <Menus>
            {menus.map(([key, rest]) => (
              <MenuItem key={key + rest} type="button">{key && <u>{key}</u>}{rest}</MenuItem>
            ))}
          </Menus>
          <MdiCaption type="button" aria-label="Свернуть чертёж"><CaptionGlyph kind="min" /></MdiCaption>
          <MdiCaption type="button" aria-label="Восстановить чертёж"><CaptionGlyph kind="restore" /></MdiCaption>
          <MdiCaption type="button" aria-label="Закрыть чертёж"><CaptionGlyph kind="close" /></MdiCaption>
        </MenuBar>
        <ToolRow>
          <ToolBar $width={279}>
            <Grip />
            <Tools names="page open save | print | undo redo | cut copy paste remove | insert" />
          </ToolBar>
          <LayerBar $width={234}>
            <Grip $width={11} />
            <Tools names="layers" />
            <LayerField aria-label="Слой" disabled />
            <Split />
            <Tools names="accept" />
          </LayerBar>
          <ToolBar $width={313}>
            <Grip />
            <Tools names="stretchX move rotate scale mirror array offset | trim extend breakLine join | fit | bomb" />
          </ToolBar>
          <ToolBar $width={59}>
            <Grip $width={13} />
            <Tools names="zoomBox+ pan" />
          </ToolBar>
        </ToolRow>
        <ToolRow>
          <ToolBar $width={646}>
            <Grip />
            <Tools names="list listTool | book | fl+ num | copyObj panels | house wall+ lamp sun grille | route+ crossA nodes junction | tree sortDoc digits devices links branch | lt+ refresh check find props" />
          </ToolBar>
          <ToolBar $width={56}>
            <Grip $width={12} />
            <Tools names="target sheet" />
          </ToolBar>
          <ToolBar $width={121}>
            <Grip $width={12} />
            <Tools names="viewLine viewX viewArc viewRect viewL" />
          </ToolBar>
          <ToolBar $width={101}>
            <Grip $width={12} />
            <Tools names="flow textBrush export alert" />
          </ToolBar>
        </ToolRow>
        <Work>
          <SideTools>
            <Grip $width={6} $across />
            <Tools across names="line | arc+ | circle+ | rect+ | poly spline hatch | point ray | region+ tag | construct segment pentagon | ellipse+ | map clip island cloud |" />
            <CutTool type="button" aria-label="text"><Icon name="text" /></CutTool>
          </SideTools>
          <Sheet>
            <Plan />
            <TabRow>
              <Arrow type="button" $dir="left" aria-label="Предыдущий лист" />
              <Arrow type="button" $dir="right" aria-label="Следующий лист" />
              <Tab type="button" $active>Model</Tab>
              <Tab type="button">Layout1</Tab>
              <Tab type="button">Layout2</Tab>
              <Track>
                <Splitter />
                <Arrow type="button" $dir="left" aria-label="Влево" />
                <RunTrack><Thumb /></RunTrack>
                <Arrow type="button" $dir="right" aria-label="Вправо" />
              </Track>
            </TabRow>
            <SheetResize viewBox="0 0 13 13" aria-hidden="true"><ResizeLines /></SheetResize>
            <LayersDialog />
            <Pointer viewBox="0 0 13 21" aria-hidden="true">
              <path d="M1 1v15l3.500-3 3 6.500 3-1-3-6.500h4.500z" fill="#fff" stroke="#333" />
            </Pointer>
          </Sheet>
        </Work>
        <Command>
          <Strip>
            <StripClose type="button" aria-label="Закрыть панель"><CaptionGlyph kind="close" /></StripClose>
            <StripName>Команды</StripName>
          </Strip>
          <Console>
            <History>
              <Log>{"1 найдено\n13 найдено\n11 найдено\nКоманда: СЛОЙ"}</Log>
              <VScroll>
                <Arrow type="button" $dir="up" aria-label="Вверх" />
                <VThumb />
                <Arrow type="button" $dir="down" aria-label="Вниз" />
              </VScroll>
            </History>
            <Prompt>Команда:<PromptInput type="text" /></Prompt>
          </Console>
        </Command>
        <Status>
          <Coords>9495.6897,15193.951,0</Coords>
          <Mode type="button" $w={31}>ШАГ</Mode>
          <Mode type="button" $w={43}>СЕТКА</Mode>
          <Mode type="button" $w={70} $on>оПРИВЯЗКА</Mode>
          <Mode type="button" $w={78}>ОТС-ОБЪЕКТ</Mode>
          <Mode type="button" $w={70} $on>пПРИВЯЗКА</Mode>
          <Mode type="button" $w={38}>ОРТО</Mode>
          <Mode type="button" $w={70} $on>ПСПривязка</Mode>
          <Copyright>Copyright © 2009 г ЗАО "Нанокад" Все права защищены</Copyright>
          <Resize viewBox="0 0 13 13" aria-hidden="true"><ResizeLines /></Resize>
        </Status>
      </Window>
    </>
  );
}
